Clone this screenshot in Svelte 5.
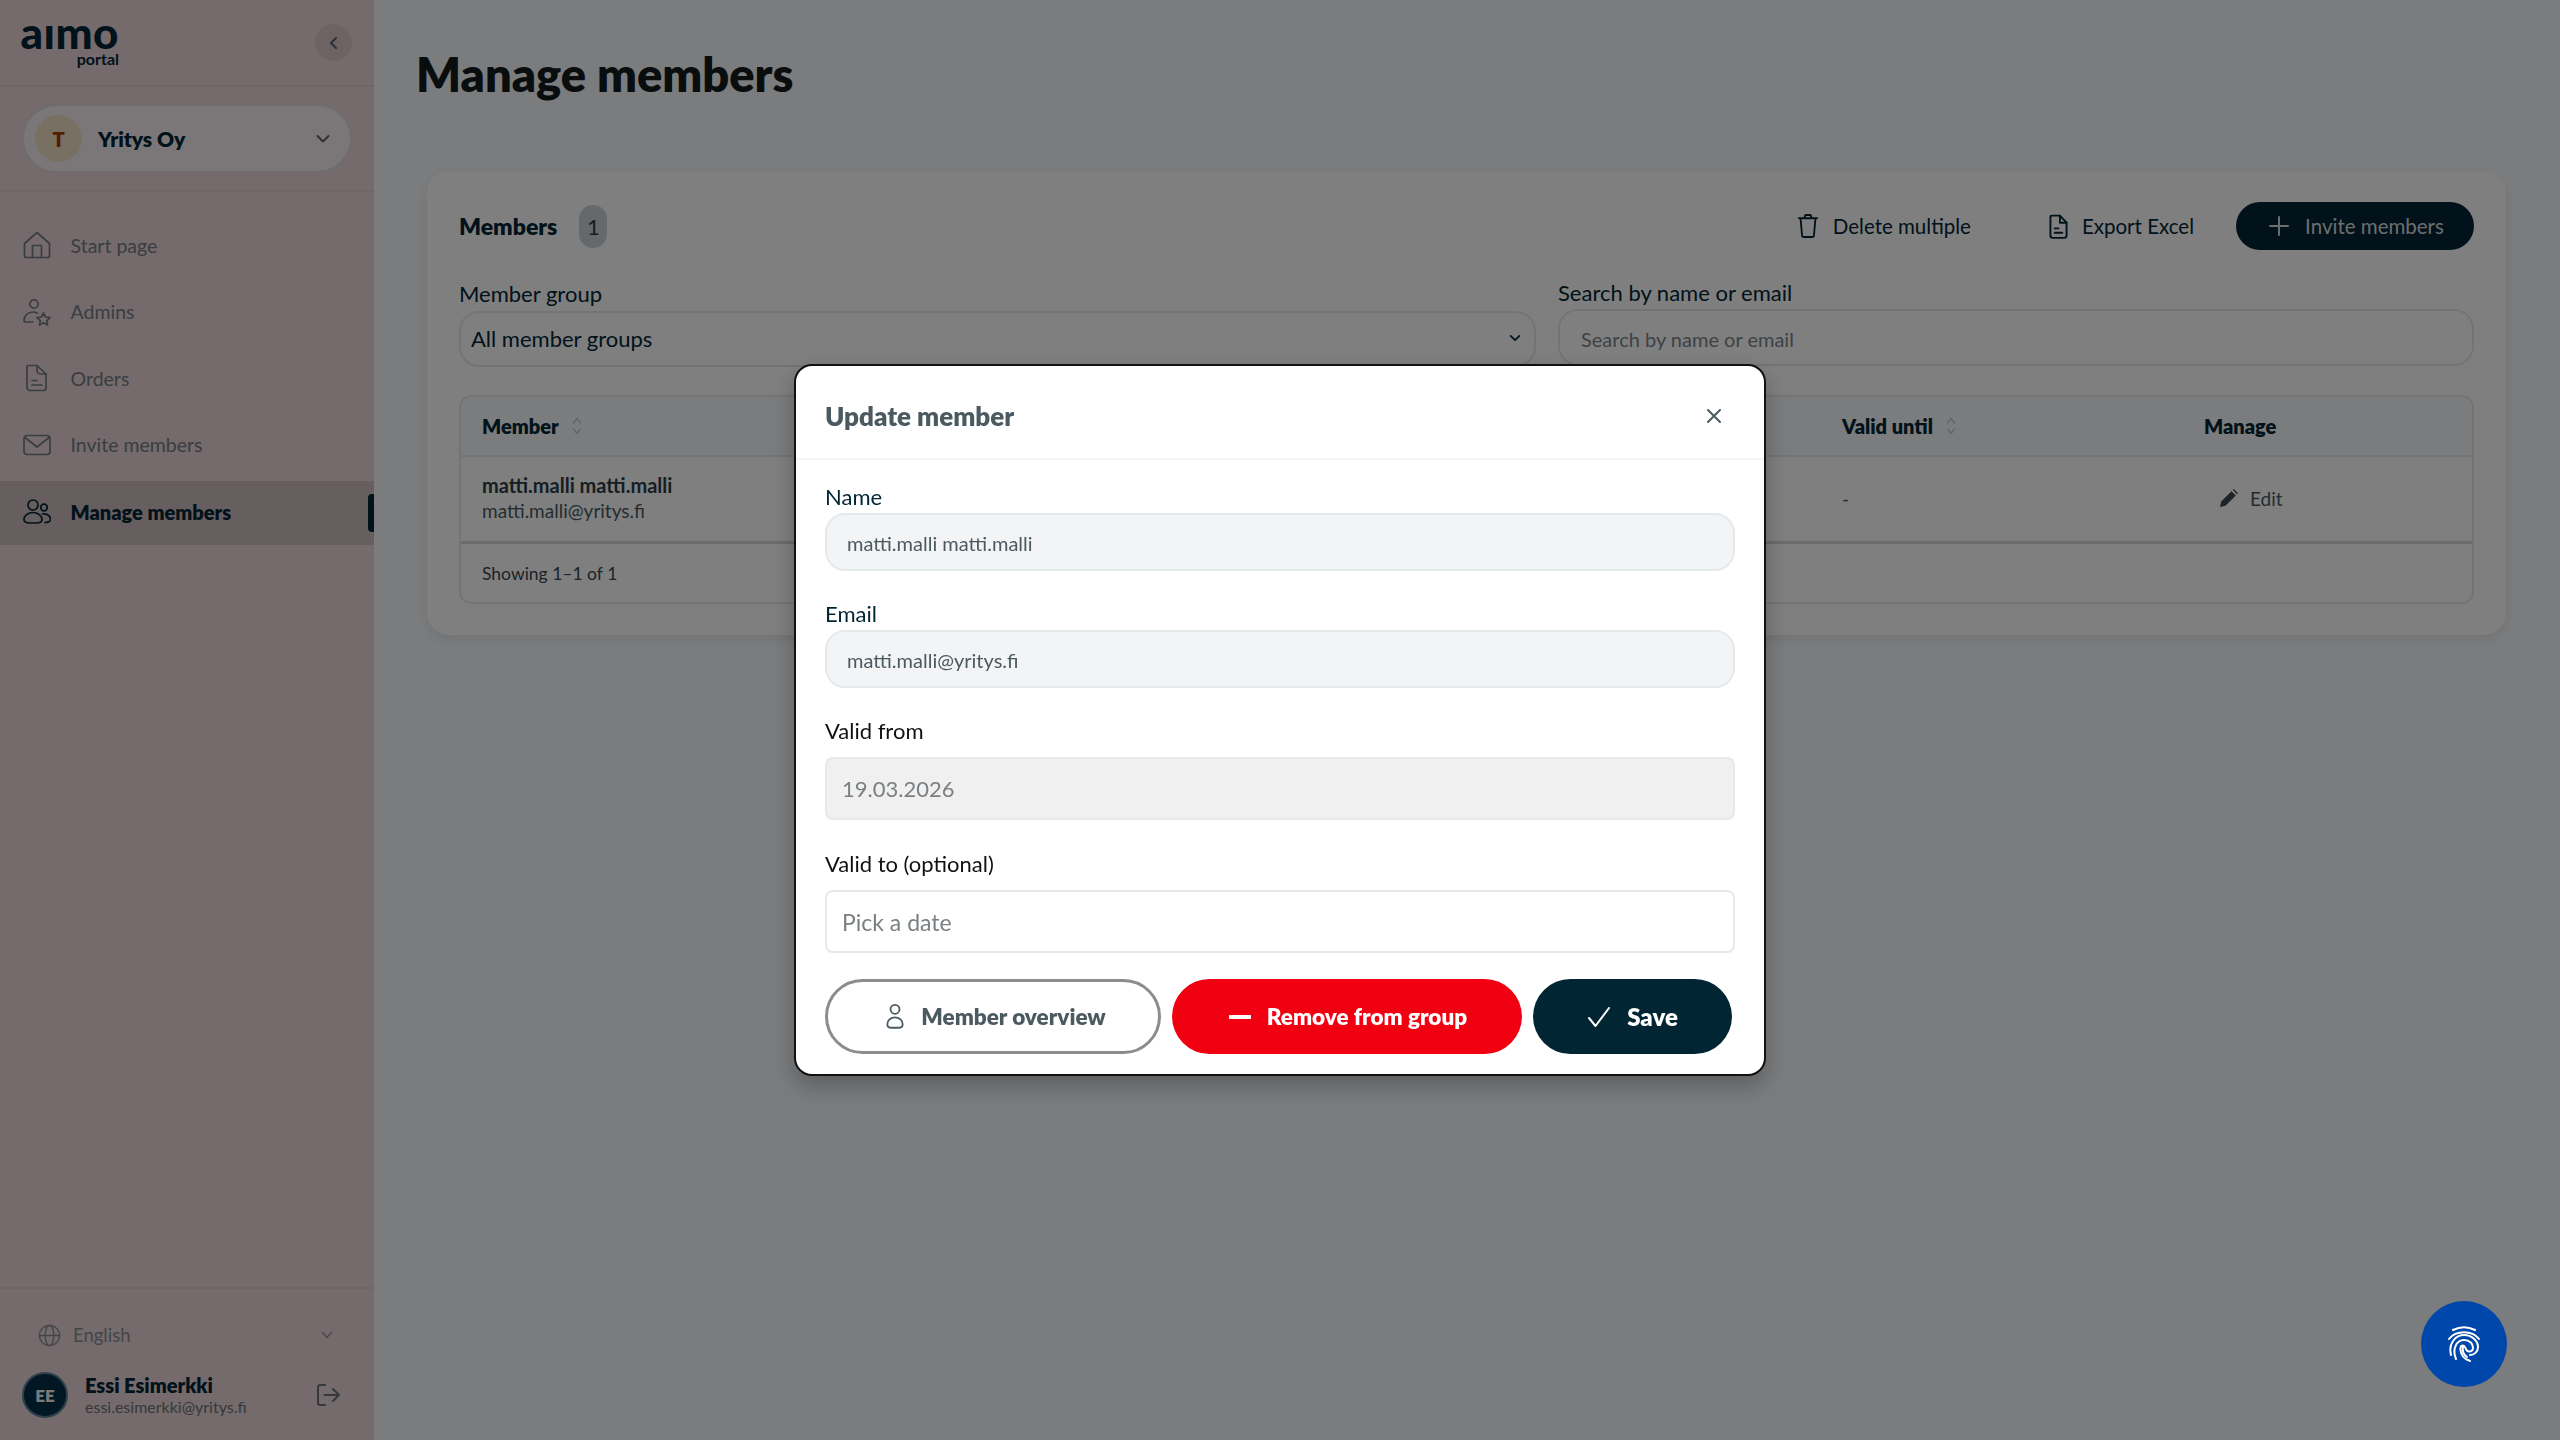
<script>
    const navItems = [
        { label: 'Start page', icon: 'home' },
        { label: 'Admins', icon: 'admin' },
        { label: 'Orders', icon: 'doc' },
        { label: 'Invite members', icon: 'mail' },
        { label: 'Manage members', icon: 'users', active: true }
    ];
</script>

{#snippet sortIcon()}
    <svg class="sort" viewBox="0 0 12 24" width="12" height="24"><path d="M2.5 9 6 4.5 9.500 9M2.500 15 6 19.500 9.500 15" /></svg>
{/snippet}

{#snippet navIcon(name)}
    <svg class="nav-icon" viewBox="0 0 28 28" width="28" height="28">
        {#if name === 'home'}
            <path d="M1.500 12.500 14 1.500l12.500 11v12a2 2 0 0 1-2 2h-21a2 2 0 0 1-2-2z" />
            <path d="M9.500 26.500V14.500h9v12" />
        {:else if name === 'admin'}
            <circle cx="11" cy="6" r="4.200" />
            <path d="M1 22.500c0-5 4-8.500 9-8.500 1.500 0 3 .3 4.200 1M1 22.500c0 1 .8 1.500 2 1.500h7" />
            <path d="m20.500 15 2 4 4.500.6-3.200 3 .8 4.400-4.100-2.200-4 2.200.8-4.400-3.300-3 4.500-.6z" />
        {:else if name === 'doc'}
            <path d="M5.500 1.500h8.500l9 8.500v14a2.500 2.500 0 0 1-2.500 2.500H7a3 3 0 0 1-3-3V3a1.500 1.500 0 0 1 1.500-1.500z" />
            <path d="M14 1.500v5a3.500 3.500 0 0 0 3.500 3.500H23M9 16.500h5M9 21h10" />
        {:else if name === 'mail'}
            <rect x="1" y="4.500" width="26" height="19" rx="3" />
            <path d="m2 6.500 12 9.500 12-9.500" />
        {:else}
            <circle cx="10" cy="7" r="5" />
            <circle cx="21" cy="9.500" r="3.300" />
            <path d="M10 14.500c-5 0-9 3.500-9 7 0 2 2.500 3.500 6 3.500h6c3.500 0 6-1.500 6-3.500 0-3.500-4-7-9-7z" />
            <path d="M19.500 16c4.500-.5 8 2 8 5 0 2-2 3.500-5.500 3.500" />
        {/if}
    </svg>
{/snippet}

<div class="app">
    <aside class="sidebar">
        <div class="brand">
            <div class="logo">
                <span class="logo-main">aımo</span>
                <span class="logo-sub">portal</span>
            </div>
            <button class="collapse" aria-label="Collapse">
                <svg viewBox="0 0 16 16" width="16" height="16"><path d="M10 3 5 8l5 5" /></svg>
            </button>
        </div>
        <div class="company-wrap">
            <div class="company">
                <span class="company-avatar">T</span>
                <span class="company-name">Yritys Oy</span>
                <svg class="chev" viewBox="0 0 16 16" width="16" height="16"><path d="m2.500 5 5.500 5.500L13.500 5" /></svg>
            </div>
        </div>
        <nav class="nav">
            {#each navItems as item}
                <div class="nav-item" class:active={item.active}>
                    {@render navIcon(item.icon)}
                    <span>{item.label}</span>
                </div>
            {/each}
        </nav>
        <div class="side-bottom">
            <div class="lang">
                <svg class="globe" viewBox="0 0 24 24" width="23" height="23">
                    <circle cx="12" cy="12" r="10.500" />
                    <ellipse cx="12" cy="12" rx="4.500" ry="10.500" />
                    <path d="M1.500 12h21" />
                </svg>
                <span>English</span>
                <svg class="lang-chev" viewBox="0 0 16 16" width="14" height="14"><path d="m2.500 5 5.500 5.500L13.500 5" /></svg>
            </div>
            <div class="user">
                <span class="user-avatar">EE</span>
                <div class="user-info">
                    <div class="user-name">Essi Esimerkki</div>
                    <div class="user-mail">essi.esimerkki@yritys.fi</div>
                </div>
                <svg class="logout" viewBox="0 0 24 24" width="24" height="24"><path d="M9 2H4a2 2 0 0 0-2 2v16a2 2 0 0 0 2 2h5M8.500 12H23M17 6l6 6-6 6" /></svg>
            </div>
        </div>
    </aside>

    <main class="main">
        <h1>Manage members</h1>
        <section class="card">
            <div class="card-head">
                <div class="members-title">Members</div>
                <span class="badge">1</span>
                <div class="actions">
                    <span class="action">
                        <svg viewBox="0 0 24 28" width="22" height="26"><path d="M4 7.500 5.500 24a2 2 0 0 0 2 2h9a2 2 0 0 0 2-2L20 7.500M2 5.500h20M8.500 5V3.500A1.500 1.500 0 0 1 10 2h4a1.500 1.500 0 0 1 1.500 1.500V5" /></svg>
                        Delete multiple
                    </span>
                    <span class="action export">
                        <svg viewBox="0 0 20 26" width="19" height="25"><path d="M3 1.500h8.500l7 7.500v13.500a2.500 2.500 0 0 1-2.500 2.500H4a2.500 2.500 0 0 1-2.500-2.500V3A1.500 1.500 0 0 1 3 1.500z" /><path d="M11.500 1.500V9h7M6 15h4M6 19.500h8" /></svg>
                        Export Excel
                    </span>
                    <button class="invite">
                        <svg viewBox="0 0 20 20" width="20" height="20"><path d="M10 1v18M1 10h18" /></svg>
                        Invite members
                    </button>
                </div>
            </div>

            <div class="filters">
                <div>
                    <div class="filter-label">Member group</div>
                    <div class="select">
                        All member groups
                        <svg viewBox="0 0 16 16" width="14" height="14"><path d="m3 5.500 5 5 5-5" /></svg>
                    </div>
                </div>
                <div>
                    <div class="filter-label search-label">Search by name or email</div>
                    <div class="search">Search by name or email</div>
                </div>
            </div>

            <div class="table">
                <div class="row head">
                    <div class="th">Member {@render sortIcon()}</div>
                    <div class="th">Valid until {@render sortIcon()}</div>
                    <div class="th">Manage</div>
                </div>
                <div class="row body">
                    <div>
                        <div class="cell-name">matti.malli matti.malli</div>
                        <div class="cell-mail">matti.malli@yritys.fi</div>
                    </div>
                    <div class="dash">-</div>
                    <div class="edit">
                        <svg viewBox="0 0 18 18" width="18" height="18"><path d="M0 18l1.200-5.500L11.500 2.200l4.300 4.300L5.500 16.800zM12.800 1l1-1 4.200 4.200-1 1z" /></svg>
                        Edit
                    </div>
                </div>
                <div class="table-foot">Showing 1–1 of 1</div>
            </div>
        </section>
    </main>

    <div class="overlay">
        <div class="modal">
            <div class="modal-head">
                <h2>Update member</h2>
                <svg class="close" viewBox="0 0 16 16" width="16" height="16"><path d="m2 2 12 12M14 2 2 14" /></svg>
            </div>
            <div class="modal-body">
                <div class="label">Name</div>
                <div class="input">matti.malli matti.malli</div>
                <div class="label second">Email</div>
                <div class="input">matti.malli@yritys.fi</div>
                <div class="label date-label first-date">Valid from</div>
                <div class="date disabled">19.03.2026</div>
                <div class="label date-label">Valid to (optional)</div>
                <div class="date placeholder">Pick a date</div>
                <div class="buttons">
                    <button class="btn outline">
                        <svg viewBox="0 0 22 30" width="20" height="27"><circle cx="11" cy="7" r="5" /><path d="M11 16c-5 0-8.500 3.500-8.500 7.500 0 2.500 2 4 4.500 4h8c2.500 0 4.500-1.500 4.500-4 0-4-3.500-7.500-8.500-7.500z" /></svg>
                        Member overview
                    </button>
                    <button class="btn red">
                        <svg viewBox="0 0 22 6" width="22" height="6"><path d="M0 3h22" /></svg>
                        Remove from group
                    </button>
                    <button class="btn dark">
                        <svg viewBox="0 0 24 24" width="24" height="24"><path d="m2 13 6.500 8L22 3" /></svg>
                        Save
                    </button>
                </div>
            </div>
        </div>
    </div>

    <button class="fab" aria-label="Privacy">
        <svg viewBox="0 0 32 36" width="32" height="36">
            <path d="M5 4C12 .5 20 .5 27 4" />
            <path d="M1 13C8 4 24 4 31 13" />
            <path d="M3 29C0 17 8 9 16 9c8 0 14 6 14 12 0 5-4 8-8 8" />
            <path d="M8 33C4 24 8 14 16 14c6 0 9 4 9 7.500 0 3-2 4-4 4-4 0-3-6-6-6-3 0-4 5 0 11 1.500 2 3.500 3.500 7 4.500" />
            <path d="M15 20c-1 5 1 9 4 11" />
        </svg>
    </button>
</div>

<style>
    :global(body) {
        margin: 0;
        font-family: "Lato", "Liberation Sans", sans-serif;
        color: #022534;
    }

    svg {
        fill: none;
        stroke: currentColor;
        stroke-width: 2;
        stroke-linecap: round;
        stroke-linejoin: round;
        flex: none;
    }

    button {
        font: inherit;
        border: none;
        padding: 0;
    }

    .app {
        display: flex;
        height: 100vh;
        background: #f6f8fa;
        overflow: hidden;
    }

    /* sidebar */
    .sidebar {
        width: 374px;
        flex: none;
        display: flex;
        flex-direction: column;
        background: #ead5d9;
        box-sizing: border-box;
    }

    .brand {
        height: 87px;
        box-sizing: border-box;
        border-bottom: 2px solid #e0cace;
        display: flex;
        align-items: center;
        justify-content: space-between;
        padding: 0 22px 0 21px;
    }

    .logo {
        width: 98px;
        display: flex;
        flex-direction: column;
        align-items: flex-end;
    }

    .logo-main {
        font-size: 44px;
        line-height: 30px;
        height: 30px;
        font-weight: 900;
        letter-spacing: 0.5px;
    }

    .logo-sub {
        font-size: 16px;
        line-height: 18px;
        margin-top: 3px;
        font-weight: 700;
    }

    .collapse {
        width: 37px;
        height: 37px;
        border-radius: 50%;
        background: #dac6ca;
        color: #56606a;
        display: flex;
        align-items: center;
        justify-content: center;
    }

    .company-wrap {
        padding: 17px 22px;
        border-bottom: 2px solid #e0cace;
    }

    .company {
        height: 69px;
        box-sizing: border-box;
        border: 2px solid #dcd8d9;
        border-radius: 35px;
        background: #f6eef0;
        display: flex;
        align-items: center;
        padding: 0 19px 0 11px;
    }

    .company-avatar {
        width: 47px;
        height: 47px;
        border-radius: 50%;
        background: #f0e0c4;
        color: #a83a05;
        font-weight: 800;
        font-size: 20px;
        display: flex;
        align-items: center;
        justify-content: center;
    }

    .company-name {
        margin-left: 16px;
        font-size: 21px;
        font-weight: 800;
        flex: 1;
    }

    .chev {
        color: #56606a;
    }

    .nav {
        padding-top: 22px;
        display: flex;
        flex-direction: column;
        gap: 2.670px;
    }

    .nav-item {
        height: 64px;
        box-sizing: border-box;
        padding-bottom: 2px;
        display: flex;
        align-items: center;
        gap: 19.500px;
        padding-left: 23px;
        font-size: 19.500px;
        color: #727c84;
        position: relative;
    }

    .nav-icon {
        stroke-width: 1.700;
        color: #727c84;
    }

    .nav-item.active {
        background: #cfbcc0;
        color: #022534;
        font-weight: 800;
        font-size: 20px;
    }

    .nav-item.active .nav-icon {
        color: #022534;
    }

    .nav-item.active::after {
        content: '';
        position: absolute;
        right: 0;
        top: 13px;
        width: 6px;
        height: 38px;
        border-radius: 4px 0 0 4px;
        background: #022534;
    }

    .side-bottom {
        margin-top: auto;
        border-top: 2px solid #e0cace;
        padding: 26px 0 22px;
    }

    .lang {
        height: 40px;
        display: flex;
        align-items: center;
        padding: 0 40px 0 38px;
        font-size: 18.500px;
        color: #868c90;
    }

    .globe {
        stroke-width: 1.400;
    }

    .lang span {
        margin-left: 12px;
        flex: 1;
    }

    .lang-chev {
        stroke-width: 1.500;
    }

    .user {
        margin-top: 17px;
        display: flex;
        align-items: center;
        padding: 0 34px 0 22px;
    }

    .user-avatar {
        width: 46px;
        height: 46px;
        box-sizing: border-box;
        border: 2px solid #5c8294;
        border-radius: 50%;
        background: #022f49;
        color: #f3f3f3;
        font-weight: 800;
        font-size: 17px;
        display: flex;
        align-items: center;
        justify-content: center;
    }

    .user-info {
        margin-left: 17px;
        flex: 1;
    }

    .user-name {
        font-weight: 800;
        font-size: 20px;
        line-height: 24px;
    }

    .user-mail {
        font-size: 16px;
        line-height: 20px;
        color: #6c7377;
    }

    .logout {
        color: #6c7377;
    }

    /* main */
    .main {
        flex: 1;
        min-width: 0;
        padding: 44px 54px 0 42px;
    }

    h1 {
        margin: 0 0 67px;
        font-size: 47px;
        line-height: 60px;
        font-weight: 800;
        color: #141a1d;
    }

    .card {
        margin-left: 11px;
        background: #fff;
        border-radius: 22px;
        padding: 31px 32px;
        box-shadow: 0 4px 12px rgba(0, 0, 0, 0.08);
    }

    .card-head {
        height: 48px;
        display: flex;
        align-items: center;
    }

    .members-title {
        font-size: 23px;
        font-weight: 800;
    }

    .badge {
        margin-left: 22px;
        width: 28px;
        height: 43px;
        border-radius: 14px;
        background: #cdd3d8;
        color: #2f3a41;
        font-size: 22px;
        display: flex;
        align-items: center;
        justify-content: center;
    }

    .actions {
        margin-left: auto;
        display: flex;
        align-items: center;
        font-size: 20.500px;
    }

    .action {
        display: flex;
        align-items: center;
        gap: 14px;
    }

    .export {
        margin-left: 78px;
    }

    .invite {
        margin-left: 42px;
        width: 238px;
        height: 48px;
        padding-left: 3px;
        border-radius: 24px;
        background: #022534;
        color: #d7dcdf;
        font-size: 20.500px;
        display: flex;
        align-items: center;
        justify-content: center;
        gap: 16px;
    }

    .filters {
        margin-top: 29px;
        display: grid;
        grid-template-columns: 1077px 1fr;
        gap: 22px;
    }

    .filter-label {
        font-size: 22px;
        line-height: 30px;
    }

    .search-label {
        margin-top: -1px;
    }

    .select {
        height: 56px;
        margin-top: 2px;
        box-sizing: border-box;
        border: 2px solid #e5e8eb;
        border-radius: 20px;
        padding: 0 12px 2px 10px;
        display: flex;
        align-items: center;
        justify-content: space-between;
        font-size: 22px;
    }

    .search {
        height: 57px;
        margin-top: 1px;
        box-sizing: border-box;
        border: 2px solid #e5e8eb;
        border-radius: 20px;
        padding: 2px 21px 0;
        display: flex;
        align-items: center;
        font-size: 20px;
        color: #7d8488;
    }

    .table {
        margin-top: 28px;
        border: 2px solid #e5e8eb;
        border-radius: 12px;
        overflow: hidden;
    }

    .row {
        display: grid;
        grid-template-columns: 1360px 362px 1fr;
        padding-left: 21px;
        align-items: center;
    }

    .head {
        height: 58px;
        background: #f6f8fa;
        border-bottom: 2px solid #e5e8eb;
    }

    .th {
        font-size: 20px;
        font-weight: 800;
        display: flex;
        align-items: center;
        gap: 12px;
    }

    .sort {
        color: #c7ced3;
        stroke-width: 1.500;
    }

    .body {
        height: 84px;
        padding-bottom: 2px;
        box-sizing: content-box;
        height: 82px;
        border-bottom: 3px solid #d3d7da;
    }

    .cell-name {
        font-size: 20px;
        line-height: 26px;
        font-weight: 700;
        color: #2c3d47;
    }

    .cell-mail {
        font-size: 19px;
        line-height: 26px;
        color: #4a5962;
    }

    .dash {
        color: #4a5962;
        font-size: 19px;
    }

    .edit {
        margin-left: 16px;
        display: flex;
        align-items: center;
        gap: 12px;
        font-size: 19px;
        color: #4a5962;
    }

    .edit svg {
        fill: #3c4850;
        stroke: none;
    }

    .table-foot {
        height: 58px;
        display: flex;
        align-items: center;
        padding-left: 21px;
        font-size: 17.500px;
        color: #39464e;
    }

    /* modal */
    .overlay {
        position: fixed;
        inset: 0;
        background: rgba(0, 0, 0, 0.5);
        display: flex;
        align-items: center;
        justify-content: center;
    }

    .modal {
        width: 972px;
        height: 712px;
        box-sizing: border-box;
        background: #fff;
        border: 2px solid #111;
        border-radius: 18px;
        box-shadow: 0 10px 24px rgba(0, 0, 0, 0.25);
    }

    .modal-head {
        height: 94px;
        box-sizing: border-box;
        border-bottom: 2px solid #f3f5f6;
        display: flex;
        align-items: center;
        justify-content: space-between;
        padding: 7px 42px 0 29px;
    }

    h2 {
        margin: 0;
        font-size: 26px;
        font-weight: 800;
        color: #4b5a61;
    }

    .close {
        color: #4b5a61;
    }

    .modal-body {
        padding: 23px 29px 0;
    }

    .label {
        font-size: 22px;
        line-height: 28px;
        color: #022534;
    }

    .input {
        margin-top: 2px;
        height: 58px;
        box-sizing: border-box;
        border: 2px solid #e4e9ec;
        border-radius: 20px;
        background: #f3f4f6;
        padding: 2px 20px 0;
        display: flex;
        align-items: center;
        font-size: 20px;
        color: #4b5a61;
    }

    .second {
        margin-top: 29px;
    }

    .date-label {
        margin-top: 30px;
        color: #111;
    }

    .first-date {
        margin-top: 29px;
    }

    .date {
        margin-top: 12px;
        height: 63px;
        box-sizing: border-box;
        border: 2px solid #e4e9ec;
        border-radius: 8px;
        padding: 0 15px;
        display: flex;
        align-items: center;
        font-size: 22px;
        color: #7a7f82;
    }

    .placeholder {
        font-size: 23px;
    }

    .disabled {
        background: #f0f0f0;
    }

    .buttons {
        margin-top: 26px;
        display: flex;
        gap: 11px;
    }

    .btn {
        height: 75px;
        box-sizing: border-box;
        border-radius: 38px;
        font-size: 22.500px;
        font-weight: 800;
        display: flex;
        align-items: center;
        justify-content: center;
        gap: 16px;
    }

    .outline {
        width: 336px;
        padding-left: 5px;
        border: 3px solid #8c8c8c;
        background: #fff;
        color: #4b5a61;
    }

    .red {
        width: 350px;
        padding-left: 2px;
        background: #f00011;
        color: #fff;
    }

    .red svg {
        stroke-width: 4;
    }

    .dark {
        width: 199px;
        font-size: 24px;
        background: #022534;
        color: #fff;
    }

    .fab {
        position: fixed;
        right: 53px;
        bottom: 53px;
        width: 86px;
        height: 86px;
        border-radius: 50%;
        background: #0047ab;
        color: #fff;
        display: flex;
        align-items: center;
        justify-content: center;
    }
</style>
